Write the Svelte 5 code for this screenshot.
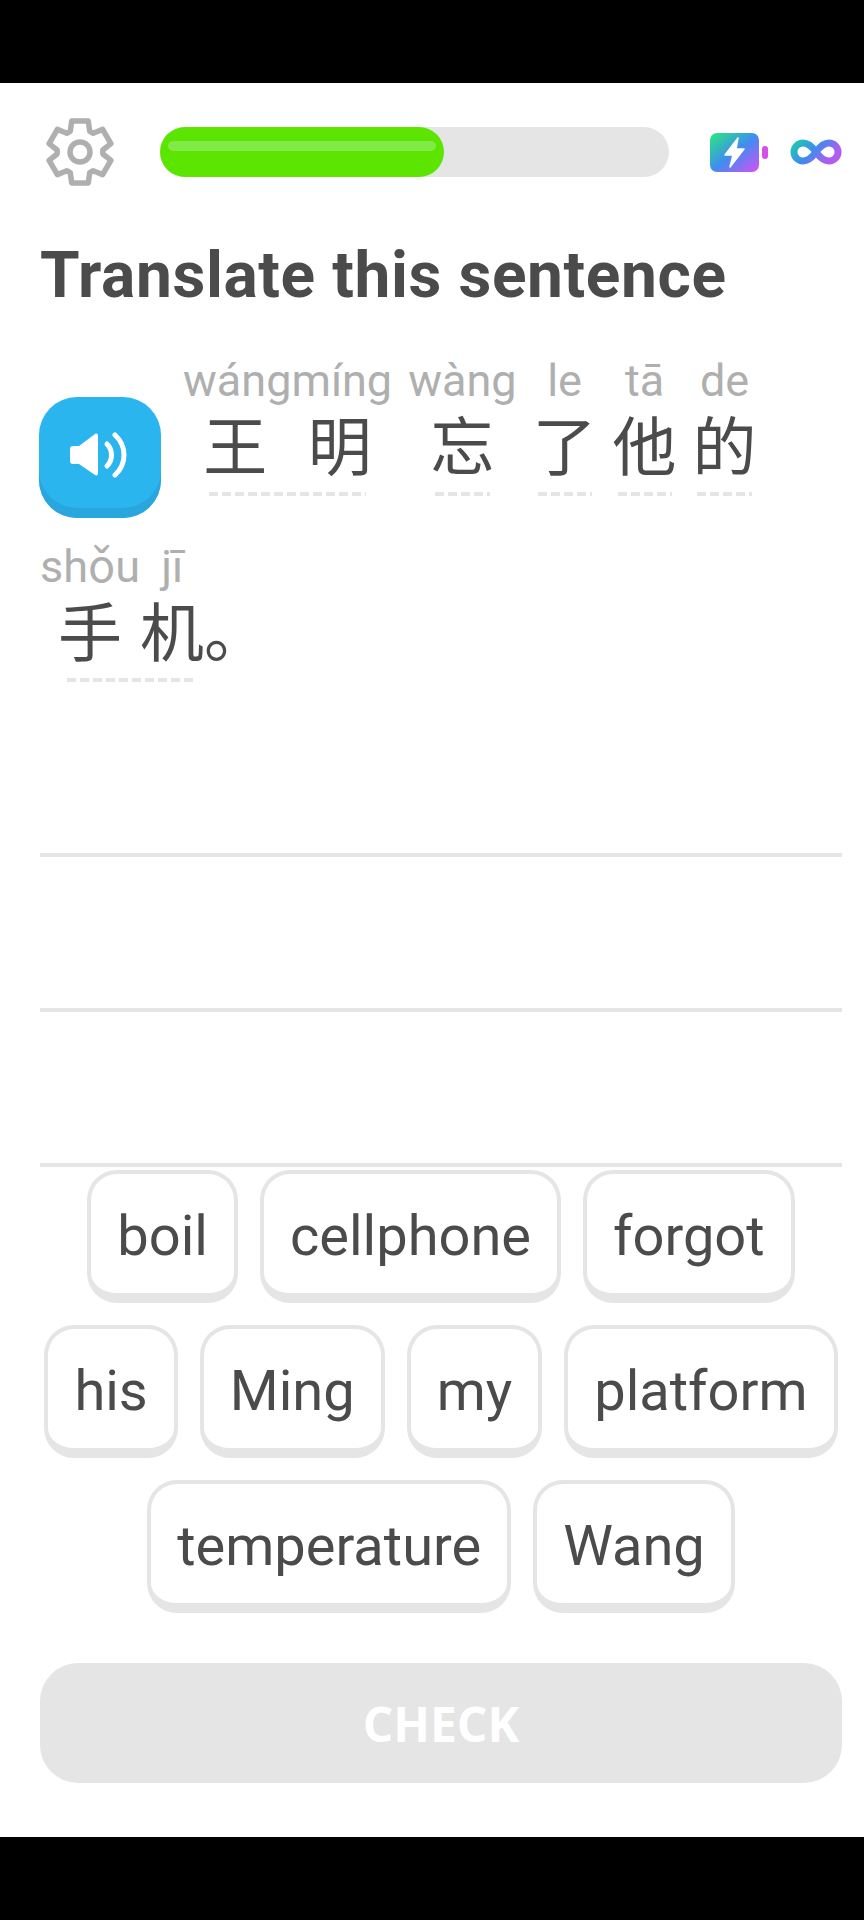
<script>
  // sentence tokens, dash = width of the dotted underline
  const tokens = [
    { cols: [{ py: "wángmíng", zh: ["王", "明"] }], dash: 157, shift: 0 },
    { cols: [{ py: "wàng", zh: ["忘"] }], dash: 55, shift: 0 },
    { cols: [{ py: "le", zh: ["了"] }], dash: 54, shift: 0 },
    { cols: [{ py: "tā", zh: ["他"] }], dash: 54, shift: 0 },
    { cols: [{ py: "de", zh: ["的"] }], dash: 55, shift: 0 },
    { cols: [{ py: "shǒu", zh: ["手"] }, { py: "jī", zh: ["机"] }], dash: 129, shift: 19 },
    { cols: [{ py: "", zh: ["。"] }], dash: 0, punct: true },
  ];

  const bank = ["boil", "cellphone", "forgot", "his", "Ming", "my", "platform", "temperature", "Wang"];

  function gearPath(cx, cy, rIn, rOut) {
    const pt = (deg, r) => {
      const a = (deg * Math.PI) / 180;
      return `${(cx + r * Math.cos(a)).toFixed(1)} ${(cy + r * Math.sin(a)).toFixed(1)}`;
    };
    let d = "";
    for (let i = 0; i < 6; i++) {
      const a = -90 + i * 60;
      d += `${i ? "L" : "M"}${pt(a - 25, rIn)} L${pt(a - 15, rOut)} L${pt(a + 15, rOut)} L${pt(a + 25, rIn)} `;
      d += `A${rIn} ${rIn} 0 0 0 ${pt(a + 35, rIn)} `;
    }
    return d + "Z";
  }
</script>

<div class="screen">
  <div class="page">
    <header class="top">
      <svg class="gear" viewBox="0 0 68 70" width="68" height="70">
        <path d={gearPath(34, 35, 23, 32)} fill="none" stroke="#afafaf" stroke-width="5.5" stroke-linejoin="round" />
        <circle cx="34" cy="35" r="10" fill="none" stroke="#afafaf" stroke-width="5.5" />
      </svg>
      <div class="progress">
        <div class="fill"><span class="shine"></span></div>
      </div>
      <div class="energy">
        <svg viewBox="0 0 58 39" width="58" height="39">
          <defs>
            <linearGradient id="batt" x1="0" y1="0" x2="1" y2="1">
              <stop offset="0" stop-color="#27ec7c" />
              <stop offset="0.5" stop-color="#3f8df0" />
              <stop offset="1" stop-color="#d850f5" />
            </linearGradient>
          </defs>
          <rect width="49" height="39" rx="7" fill="url(#batt)" />
          <rect x="52" y="13" width="6" height="13" rx="3" fill="#d64fe8" />
          <path d="M28 5 L15 22 L23 22 L20 34 L34 16 L26 16 Z" fill="#fff" stroke="#fff" stroke-width="1.5" stroke-linejoin="round" />
        </svg>
        <svg viewBox="0 0 52 26" width="52" height="26">
          <defs>
            <linearGradient id="inf" x1="0" y1="0" x2="1" y2="0.4">
              <stop offset="0" stop-color="#1fc8b0" />
              <stop offset="0.5" stop-color="#3d8cf0" />
              <stop offset="1" stop-color="#b05cf0" />
            </linearGradient>
          </defs>
          <path d="M26 13 C21 6 17 4 13 4 C8 4 4 8 4 13 C4 18 8 22 13 22 C17 22 21 20 26 13 C31 6 35 4 39 4 C44 4 48 8 48 13 C48 18 44 22 39 22 C35 22 31 20 26 13 Z" fill="none" stroke="url(#inf)" stroke-width="7" />
        </svg>
      </div>
    </header>

    <h1 class="title">Translate this sentence</h1>

    <div class="sentence">
      <button class="speaker" aria-label="Play audio">
        <svg viewBox="0 0 60 46" width="60" height="46">
          <path d="M3 14 C1 14 0 15 0 17 V29 C0 31 1 32 3 32 H9 L25 43 C27 44 28 43 28 41 V4 C28 2 27 1 25 2 L9 14 Z" fill="#fff" />
          <path d="M37 12 C43 18 43 28 37 34" fill="none" stroke="#fff" stroke-width="5" stroke-linecap="round" />
          <path d="M45 3 C57 14 57 32 45 43" fill="none" stroke="#fff" stroke-width="5" stroke-linecap="round" />
        </svg>
      </button>
      {#each tokens as token}
        <div class="token" class:punct={token.punct}>
          <div class="cols">
            {#each token.cols as col}
              <div class="col">
                <span class="pinyin">{col.py}</span>
                <div class="hanzi">
                  {#each col.zh as ch}<span>{ch}</span>{/each}
                </div>
              </div>
            {/each}
          </div>
          {#if token.dash}
            <div class="dash" style="width: {token.dash}px; margin-left: {token.shift}px"></div>
          {/if}
        </div>
      {/each}
    </div>

    <div class="lines">
      <div class="line"></div>
      <div class="line"></div>
      <div class="line"></div>
    </div>

    <div class="bank">
      {#each bank as word}
        <button class="tile">{word}</button>
      {/each}
    </div>

    <button class="check">CHECK</button>
  </div>
</div>

<style>
  :global(body) {
    background: #000;
  }

  .screen {
    height: 1920px;
    padding: 83px 0;
    box-sizing: border-box;
    background: #000;
    font-family: Roboto, "Noto Sans CJK SC", sans-serif;
    color: #4b4b4b;
  }

  .page {
    height: 1754px;
    background: #fff;
    display: flex;
    flex-direction: column;
    overflow: hidden;
  }

  .top {
    display: flex;
    align-items: center;
    padding: 34px 22px 0 46px;
  }

  .gear {
    flex: none;
  }

  .progress {
    width: 510px;
    height: 50px;
    margin-left: 46px;
    border-radius: 25px;
    background: #e5e5e5;
  }

  .fill {
    width: 284px;
    height: 50px;
    border-radius: 25px;
    background: #5ce500;
    padding: 14px 8px 0;
    box-sizing: border-box;
  }

  .shine {
    display: block;
    height: 10px;
    border-radius: 5px;
    background: #80ea46;
  }

  .energy {
    display: flex;
    align-items: center;
    gap: 22px;
    margin-left: 41px;
  }

  .title {
    margin: 54px 0 0 40px;
    font-size: 64px;
    line-height: 70px;
    font-weight: 700;
    letter-spacing: 0.6px;
    color: #4b4b4b;
  }

  .sentence {
    display: flex;
    flex-wrap: wrap;
    align-items: flex-start;
    column-gap: 16px;
    row-gap: 22px;
    margin: 43px 0 0 40px;
    width: 780px;
  }

  .speaker {
    width: 122px;
    height: 121px;
    margin: 43px 6px 0 -1px;
    padding: 0 0 6px;
    border: none;
    border-radius: 38px;
    background: #2bb5ef;
    box-shadow: inset 0 -10px 0 #2aa6de;
    display: flex;
    align-items: center;
    justify-content: center;
  }

  .token {
    display: flex;
    flex-direction: column;
    align-items: center;
  }

  .token.punct {
    margin-left: -16px;
  }

  .cols {
    display: flex;
  }

  .col {
    display: flex;
    flex-direction: column;
    align-items: center;
  }

  .pinyin {
    font-size: 45px;
    line-height: 54px;
    height: 54px;
    color: #afafaf;
  }

  .hanzi {
    display: flex;
    justify-content: space-around;
    align-self: stretch;
    margin-top: 4px;
    font-size: 64px;
    line-height: 74px;
    color: #4b4b4b;
  }

  .dash {
    height: 4px;
    margin-top: 6px;
    background: repeating-linear-gradient(90deg, #e5e5e5 0 9px, transparent 9px 13px);
  }

  .lines {
    margin: 20px 22px 0 40px;
  }

  .line {
    height: 151px;
    border-bottom: 4px solid #e5e5e5;
  }

  .bank {
    display: flex;
    flex-wrap: wrap;
    justify-content: center;
    gap: 22px;
    padding: 0 22px 0 40px;
    margin-top: 3px;
  }

  .tile {
    height: 133px;
    padding: 4px 26px 0;
    box-sizing: border-box;
    border: 4px solid #e5e5e5;
    border-bottom-width: 10px;
    border-radius: 30px;
    background: #fff;
    font-family: Roboto, sans-serif;
    font-size: 56px;
    color: #4b4b4b;
  }

  .check {
    margin: 50px 22px 0 40px;
    height: 120px;
    border: none;
    border-radius: 38px;
    background: #e5e5e5;
    color: #fff;
    font-family: "Open Sans", sans-serif;
    font-size: 48px;
    font-weight: 700;
  }
</style>
